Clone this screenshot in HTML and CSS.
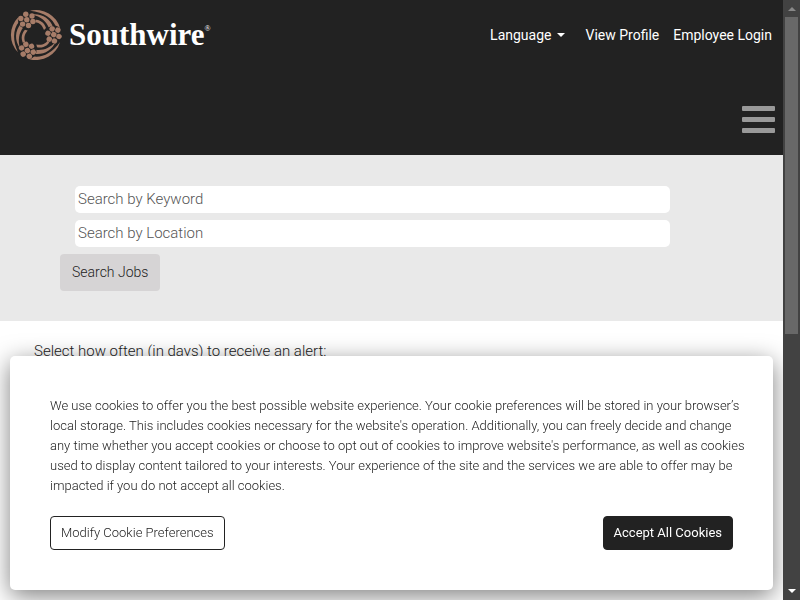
FILE: index.html
```html
<!DOCTYPE html>
<html lang="en">
<head>
<meta charset="utf-8">
<meta name="viewport" content="width=device-width, initial-scale=1">
<title>Southwire Careers</title>
<link rel="stylesheet" href="styles.css">
</head>
<body>
<div class="page">
  <header class="header">
    <div class="topbar">
      <a class="logo" href="#" aria-label="Southwire">
        <svg class="logo-mark" viewBox="-26 -26 52 52" aria-hidden="true">
          <defs>
            <g id="strand">
              <path d="M-6-24.300A25 25 0 0 1 24.200-6.500L20-8C17-16.500 8-23-6-24.300z"/>
              <path d="M-4-20.500C6-21.500 14-16.500 17.500-7L13-7C10.500-13.500 5-18.500-4-20.500z"/>
              <path d="M-4-15.300C3-16 8-13 10-7L8-5C6-10.500 3-13-4-13.300z"/>
            </g>
            <g id="bundle">
              <circle class="gap" cx="-9.200" cy="-15.200" r="9"/>
              <circle cx="-9.200" cy="-15.200" r="2.700"/>
              <circle cx="-10.200" cy="-20.700" r="2.700"/>
              <circle cx="-4" cy="-19" r="2.700"/>
              <circle cx="-3.100" cy="-13.500" r="2.700"/>
              <circle cx="-7.500" cy="-9.500" r="2.700"/>
              <circle cx="-13.400" cy="-10.900" r="2.700"/>
              <circle cx="-15.200" cy="-16.500" r="2.700"/>
            </g>
          </defs>
          <use href="#strand"/>
          <use href="#strand" transform="rotate(120)"/>
          <use href="#strand" transform="rotate(240)"/>
          <use href="#bundle"/>
          <use href="#bundle" transform="rotate(120)"/>
          <use href="#bundle" transform="rotate(240)"/>
        </svg>
        <span class="logo-name">Southwire<sup>®</sup></span>
      </a>
      <nav class="links" aria-label="Account">
        <button class="language" type="button">Language <span class="caret"></span></button>
        <a href="#">View Profile</a>
        <a href="#">Employee Login</a>
      </nav>
    </div>
    <button class="menu" type="button" aria-label="Menu"><span></span><span></span><span></span></button>
  </header>
  <main>
    <form class="search">
      <input type="text" placeholder="Search by Keyword" aria-label="Search by Keyword">
      <input type="text" placeholder="Search by Location" aria-label="Search by Location">
      <button type="button">Search Jobs</button>
    </form>
    <p class="alert">Select how often (in days) to receive an alert:</p>
  </main>
</div>
<section class="cookies" aria-label="Cookies">
  <p>We use cookies to offer you the best possible website experience. Your cookie preferences will be stored in your browser’s local storage. This includes cookies necessary for the website's operation. Additionally, you can freely decide and change any time whether you accept cookies or choose to opt out of cookies to improve website's performance, as well as cookies used to display content tailored to your interests. Your experience of the site and the services we are able to offer may be impacted if you do not accept all cookies.</p>
  <div class="cookie-actions">
    <button class="modify" type="button">Modify Cookie Preferences</button>
    <button class="accept" type="button">Accept All Cookies</button>
  </div>
</section>
<div class="scrollbar" aria-hidden="true">
  <span class="arrow-up"></span>
  <span class="track"><span class="thumb"></span></span>
  <span class="arrow-down"></span>
</div>
</body>
</html>
```
FILE: styles.css
```css
* { box-sizing: border-box; }
html, body { height: 100%; }
body {
  margin: 0;
  padding-right: 17px;
  overflow: hidden;
  background: #fff;
  color: #222;
  font: 300 15px/20px Roboto, "Liberation Sans", sans-serif;
}
button, input { font: inherit; }
button { cursor: pointer; }

.header {
  display: flex;
  flex-direction: column;
  justify-content: space-between;
  min-height: 155px;
  padding: 9px 8px 22px 10px;
  background: #222;
}
.topbar {
  display: flex;
  justify-content: space-between;
  align-items: center;
}
.logo {
  display: flex;
  align-items: center;
  gap: 7px;
  color: #fff;
  text-decoration: none;
}
.logo-mark {
  width: 52px;
  height: 52px;
  fill: #a67c68;
}
.logo-mark .gap {
  fill: #222;
}
.logo-name {
  font: 700 31px/36px "Liberation Serif", serif;
}
.logo-name sup {
  font-size: 8px;
  font-weight: 400;
  line-height: 8px;
  vertical-align: 14px;
}
.links {
  display: flex;
  align-items: center;
  gap: 14px;
  padding-right: 3px;
  font-size: 14px;
  font-weight: 400;
}
.links a {
  color: #fff;
  text-decoration: none;
}
.language {
  display: flex;
  align-items: center;
  gap: 6px;
  margin-right: 6px;
  padding: 0;
  border: 0;
  background: none;
  color: #fff;
}
.caret {
  border: 4px solid transparent;
  border-top-color: #fff;
  border-bottom: 0;
}
.menu {
  display: flex;
  flex-direction: column;
  gap: 6px;
  align-self: flex-end;
  width: 33px;
  padding: 0;
  border: 0;
  background: none;
}
.menu span {
  height: 5px;
  border-radius: 1px;
  background: #999;
}

.search {
  display: flex;
  flex-direction: column;
  align-items: flex-start;
  gap: 7px;
  padding: 31px 113px 30px 60px;
  background: #e9e9e9;
}
.search input {
  align-self: stretch;
  height: 27px;
  margin-left: 15px;
  padding: 0 3px 2px;
  border: 0;
  border-radius: 5px;
  background: #fff;
  color: #222;
}
.search input::placeholder {
  color: #555;
  opacity: 1;
}
.search button {
  height: 37px;
  padding: 0 12px 2px;
  border: 0;
  border-radius: 4px;
  background: #d6d4d5;
  color: #222;
  font-size: 14px;
}
.alert {
  margin: 20px 34px;
}

.cookies {
  position: fixed;
  right: 27px;
  bottom: 10px;
  left: 10px;
  padding: 40px;
  border-radius: 5px;
  background: #fff;
  box-shadow: 0 6px 24px rgba(0, 0, 0, .5);
  font-size: 13px;
}
.cookies p {
  margin: 0 -16px 20px 0;
}
.cookie-actions {
  display: flex;
  justify-content: space-between;
}
.cookie-actions button {
  height: 34px;
  padding: 0 10px;
  border: 1px solid #222;
  border-radius: 4px;
}
.modify {
  background: #fff;
  color: #222;
}
.accept {
  background: #222;
  color: #fff;
  font-weight: 400;
}

.scrollbar {
  position: fixed;
  top: 0;
  right: 0;
  bottom: 0;
  display: flex;
  flex-direction: column;
  align-items: center;
  width: 17px;
  padding: 7px 0;
  background: #424242;
}
.track {
  flex: 1;
  width: 13px;
  margin: 6px 0;
}
.thumb {
  display: block;
  height: 56%;
  background: #686868;
}
.arrow-up, .arrow-down {
  border: 4px solid transparent;
}
.arrow-up {
  border-top: 0;
  border-bottom-color: #888;
}
.arrow-down {
  border-bottom: 0;
  border-top-color: #fff;
}
```
